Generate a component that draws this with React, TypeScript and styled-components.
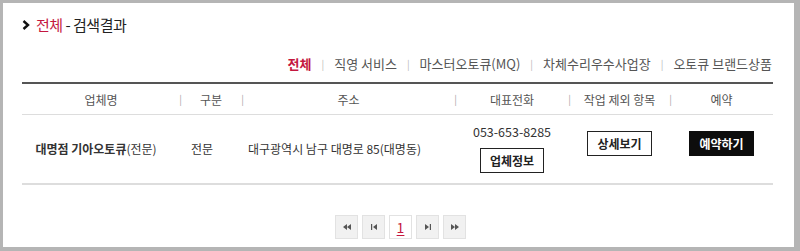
import styled, { createGlobalStyle } from "styled-components";

const Global = createGlobalStyle`
body{
    margin: 0;
    background: #fff;
    font-family: "Noto Sans CJK KR", "Noto Sans", sans-serif;
}
`

const cols = [158, 62, 213, 114, 101, 103]

const App = () => {
    return (
        <Frame>
            <Global />
            <Title>
                <Chevron viewBox="0 0 8 10">
                    <path d="M1.5 1 L6 5 L1.5 9" fill="none" stroke="#111" strokeWidth="2.4" />
                </Chevron>
                <Red>전체</Red>&nbsp;- 검색결과
            </Title>
            <Tabs>
                <Tab active>전체</Tab>
                <Sep>|</Sep>
                <Tab>직영 서비스</Tab>
                <Sep>|</Sep>
                <Tab>마스터오토큐(MQ)</Tab>
                <Sep>|</Sep>
                <Tab>차체수리우수사업장</Tab>
                <Sep>|</Sep>
                <Tab>오토큐 브랜드상품</Tab>
            </Tabs>
            <Table>
                <colgroup>
                    {cols.map((w, i) => <col key={i} style={{ width: w }} />)}
                </colgroup>
                <thead>
                    <tr>
                        <Th>업체명</Th>
                        <Th>구분</Th>
                        <Th>주소</Th>
                        <Th>대표전화</Th>
                        <Th>작업 제외 항목</Th>
                        <Th last>예약</Th>
                    </tr>
                </thead>
                <tbody>
                    <tr>
                        <Td shift={10}><Strong>대명점 기아오토큐</Strong>(전문)</Td>
                        <Td shift={18}>전문</Td>
                        <Td shift={28}>대구광역시 남구 대명로 85(대명동)</Td>
                        <Td>
                            <Phone>053-653-8285</Phone>
                            <Button>업체정보</Button>
                        </Td>
                        <Td raised><Button>상세보기</Button></Td>
                        <Td raised><Button dark>예약하기</Button></Td>
                    </tr>
                </tbody>
            </Table>
            <Pager>
                <PageBtn>
                    <svg width="8" height="6" viewBox="0 0 8 6"><path d="M4 0 L0 3 L4 6Z M8 0 L4 3 L8 6Z" fill="#555" /></svg>
                </PageBtn>
                <PageBtn>
                    <svg width="6" height="6" viewBox="0 0 6 6"><path d="M0 0 H1.2 V6 H0Z M6 0 L2 3 L6 6Z" fill="#555" /></svg>
                </PageBtn>
                <PageBtn current>1</PageBtn>
                <PageBtn>
                    <svg width="6" height="6" viewBox="0 0 6 6"><path d="M0 0 L4 3 L0 6Z M4.8 0 H6 V6 H4.8Z" fill="#555" /></svg>
                </PageBtn>
                <PageBtn>
                    <svg width="8" height="6" viewBox="0 0 8 6"><path d="M0 0 L4 3 L0 6Z M4 0 L8 3 L4 6Z" fill="#555" /></svg>
                </PageBtn>
            </Pager>
        </Frame>
    )
}

export default App;

const Frame = styled.div`
box-sizing: border-box;
width: 800px;
height: 251px;
border-style: solid;
border-color: #b5b5b5;
border-width: 3px 6px 4px 3px;
padding: 13px 21px 0 19px;
background: #fff;
`
const Title = styled.div`
display: flex;
align-items: center;
font-size: 15px;
line-height: 18px;
color: #222;
letter-spacing: -0.5px;
`
const Chevron = styled.svg`
width: 8px;
height: 10px;
margin-right: 6px;
`
const Red = styled.span`
color: #c4173f;
`
const Tabs = styled.div`
display: flex;
justify-content: flex-end;
align-items: center;
gap: 10px;
margin-top: 21px;
padding-right: 1px;
font-size: 13px;
line-height: 18px;
`
const Tab = styled.span<{ active?: boolean }>`
color: ${p => (p.active ? "#c4173f" : "#555")};
font-weight: ${p => (p.active ? "bold" : "normal")};
`
const Sep = styled.span`
color: #bbb;
font-size: 10px;
`
const Table = styled.table`
width: 751px;
margin-top: 9px;
border-collapse: collapse;
table-layout: fixed;
border-top: 2px solid #555;
font-size: 12px;
color: #333;
`
const Th = styled.th<{ last?: boolean }>`
position: relative;
height: 30px;
padding: 0;
font-weight: normal;
color: #555;
white-space: nowrap;
border-bottom: 1px solid #ddd;
&::after{
    content: "${p => (p.last ? "" : "|")}";
    position: absolute;
    right: -2px;
    top: 7px;
    font-size: 10px;
    color: #aaa;
}
`
const Td = styled.td<{ shift?: number; raised?: boolean }>`
box-sizing: border-box;
height: 69px;
padding: 0 ${p => p.shift ?? 0}px 0 0;
text-align: center;
vertical-align: middle;
white-space: nowrap;
border-bottom: 2px solid #ddd;
& > span{
    position: relative;
    top: ${p => (p.raised ? -5 : 0)}px;
}
`
const Strong = styled.span`
font-weight: bold;
color: #333;
`
const Phone = styled.div`
font-size: 12.5px;
line-height: 16px;
color: #333;
margin: 0 0 8px;
`
const Button = styled.span<{ dark?: boolean }>`
display: inline-block;
box-sizing: border-box;
height: 25px;
line-height: 23px;
padding: 0 9px;
font-size: 12px;
font-weight: bold;
color: ${p => (p.dark ? "#fff" : "#222")};
background: ${p => (p.dark ? "#0d0d0d" : "#fff")};
border: 1px solid ${p => (p.dark ? "#0d0d0d" : "#222")};
`
const Pager = styled.div`
display: flex;
justify-content: center;
gap: 4px;
margin-top: 30px;
padding-left: 6px;
`
const PageBtn = styled.span<{ current?: boolean }>`
display: flex;
align-items: center;
justify-content: center;
box-sizing: border-box;
width: 23px;
height: 24px;
border: 1px solid #e2e2e2;
background: ${p => (p.current ? "#fff" : "#f1f1f1")};
color: #c4173f;
font-size: 14px;
text-decoration: ${p => (p.current ? "underline" : "none")};
text-underline-offset: 2px;
`
